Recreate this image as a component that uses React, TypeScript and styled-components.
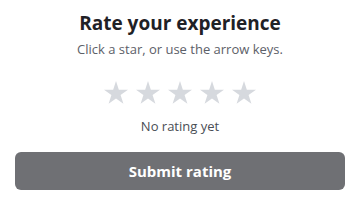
import * as React from 'react';
import styled, { createGlobalStyle } from 'styled-components';

const GlobalStyle = createGlobalStyle`
  body {
    margin: 0;
    background: #ffffff;
    font-family: "Open Sans", "Noto Sans", sans-serif;
  }
`;

const Panel = styled.div`
  width: 360px;
  box-sizing: border-box;
  padding: 10px 15px 0;
  display: flex;
  flex-direction: column;
  align-items: center;
`;

const Title = styled.h2`
  margin: 0;
  font-size: 19px;
  line-height: 26px;
  font-weight: 700;
  color: #1f2126;
`;

const SubTitle = styled.p`
  margin: 4px 0 0;
  font-size: 13px;
  line-height: 18px;
  color: #5c6068;
`;

const Stars = styled.div`
  display: flex;
  gap: 8px;
  margin-top: 23px;
`;

const StarButton = styled.button<{ $active: boolean }>`
  padding: 0;
  border: 0;
  background: none;
  cursor: pointer;
  width: 24px;
  height: 23px;
  color: ${(p) => (p.$active ? '#f5b301' : '#d6d9de')};
  svg {
    display: block;
  }
`;

const Status = styled.div`
  margin-top: 13px;
  font-size: 13px;
  line-height: 18px;
  color: #4a4e55;
`;

const Submit = styled.button`
  margin-top: 17px;
  width: 100%;
  height: 38px;
  border: 0;
  border-radius: 6px;
  background: #6f7074;
  color: #ffffff;
  font-family: inherit;
  font-size: 15px;
  font-weight: 700;
`;

function Star() {
  return (
    <svg width="24" height="23" viewBox="0 0 24 23" aria-hidden>
      <path
        fill="currentColor"
        d="M12 0L14.83 8.7H24L16.58 14.09L19.41 22.79L12 17.42L4.59 22.79L7.42 14.09L0 8.7H9.17Z"
      />
    </svg>
  );
}

export default function App() {
  const [rating, setRating] = React.useState(0);
  const labels = ['No rating yet', 'Poor', 'Fair', 'Good', 'Very good', 'Excellent'];
  return (
    <>
      <GlobalStyle />
      <Panel>
        <Title>Rate your experience</Title>
        <SubTitle>Click a star, or use the arrow keys.</SubTitle>
        <Stars>
          {[1, 2, 3, 4, 5].map((n) => (
            <StarButton
              key={n}
              $active={n <= rating}
              aria-label={`${n} star`}
              onClick={() => setRating(n)}
            >
              <Star />
            </StarButton>
          ))}
        </Stars>
        <Status>{labels[rating]}</Status>
        <Submit disabled={rating === 0}>Submit rating</Submit>
      </Panel>
    </>
  );
}
